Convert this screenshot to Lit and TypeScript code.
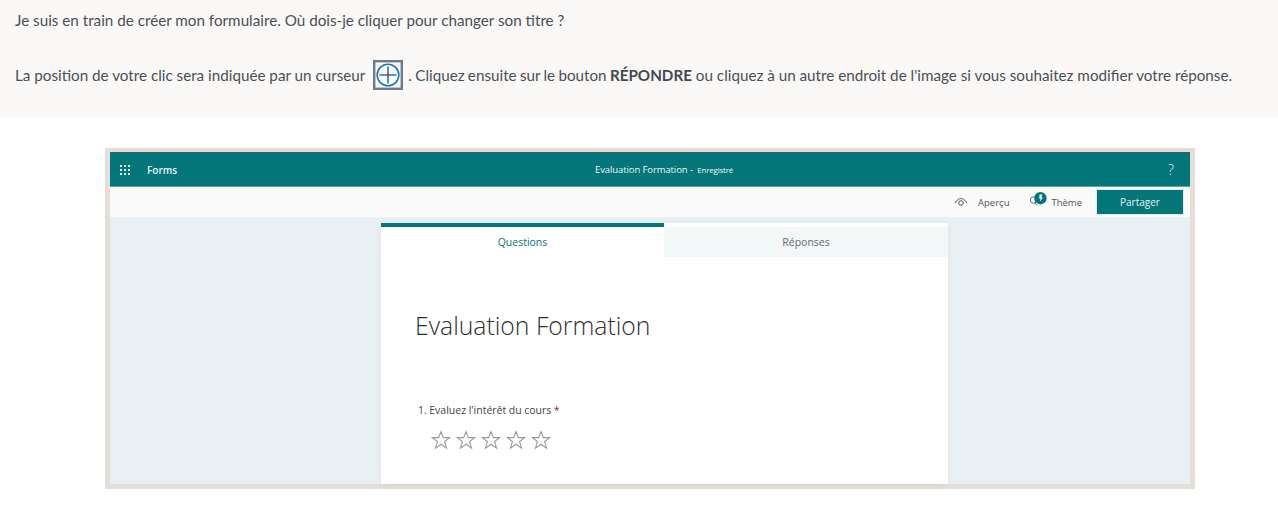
import { LitElement, html, css, svg } from "lit";
import { customElement } from "lit/decorators.js";

const star = svg`<svg class="star" width="20" height="20" viewBox="0 0 20 20"><path d="M10 1.6l2.3 6h6.4l-5.1 3.9 1.9 6.6L10 14.2l-5.5 3.9 1.9-6.6L1.3 7.6h6.4z" fill="none" stroke="#9a9a9a" stroke-width="1.1"/></svg>`;

@customElement("app-root")
export class AppRoot extends LitElement {
  static styles = css`
    :host { display: block; width: 1278px; height: 509px; background: #fff; font-family: Lato, "Liberation Sans", sans-serif; overflow: hidden; }
    .intro { height: 117px; box-sizing: border-box; background: #faf9f7; padding: 10px 15px 0; color: #4a4f55; font-size: 15.22px; }
    .line { line-height: 20px; white-space: nowrap; }
    .l2 { margin-top: 30px; display: flex; align-items: center; height: 30px; }
    .cursor { margin: 0 5px 0 8px; flex: none; display: block; }
    .tight { word-spacing: -0.6px; }
    b { font-weight: 700; color: #44494f; }
    .wrap { padding: 31px 83px 0 105px; }
    .frame { width: 1090px; height: 341px; box-sizing: border-box; border: 5px solid #e3dfd8; border-top-width: 4px; display: flex; flex-direction: column; background: #e8f0f3; font-family: "Open Sans", "Noto Sans", sans-serif; }
    .top { height: 35px; flex: none; box-sizing: border-box; background: #04767a; border-top: 1px solid #4a5a5a; border-bottom: 1px solid #5fa5a8; color: #eaf5f5; display: grid; grid-template-columns: 485px auto 1fr; align-items: center; padding: 0 16px 0 0; }
    .brand { display: flex; align-items: center; gap: 17px; font-size: 10px; font-weight: 600; padding-left: 10px; }
    .grid { display: grid; grid-template-columns: repeat(3, 2px); gap: 2px; }
    .grid i { width: 2px; height: 2px; background: #e6f2f2; }
    .title { font-size: 9.5px; letter-spacing: -0.1px; }
    .title small { font-size: 8px; margin-left: 2px; letter-spacing: -0.2px; }
    .help { justify-self: end; font-size: 14px; font-weight: 300; color: #e0eeee; }
    .tools { height: 30px; flex: none; background: #fafafa; display: flex; align-items: center; justify-content: flex-end; padding: 0 6px 0 0; font-size: 9.5px; color: #555; }
    .tool { display: flex; align-items: center; }
    .preview { gap: 10px; margin-right: 20px; }
    .theme { gap: 4px; margin-right: 14px; }
    .theme svg { margin-top: -5px; }
    .share { width: 88px; height: 26px; background: #04767a; color: #e4f2f2; display: flex; align-items: center; justify-content: center; font-size: 10px; border: 1px solid #d8ecec; box-sizing: border-box; }
    .body { flex: 1; padding: 6px 0 0 271px; min-height: 0; }
    .card { width: 567px; height: 100%; background: #fff; box-shadow: 0 0 6px rgba(0,0,0,.06); display: flex; flex-direction: column; }
    .tabs { display: flex; height: 34px; flex: none; font-size: 10.5px; }
    .tab { flex: 1; display: flex; align-items: center; justify-content: center; box-sizing: border-box; }
    .active { width: 283px; flex: none; border-top: 4px solid #04767a; color: #04767a; background: #fff; }
    .other { background: #f2f7f8; color: #6a6a6a; margin-top: 4px; }
    h1 { margin: 52px 0 0 34px; font-size: 24.75px; font-weight: 300; line-height: 34px; color: #2f2f2f; }
    .q { margin: 60px 0 0 37px; font-size: 10.5px; line-height: 14px; color: #444; word-spacing: -0.2px; }
    .q span { color: #a4262c; }
    .stars { margin: 13px 0 0 50px; display: flex; gap: 5.1px; }
    .star { display: block; }
  `;

  render() {
    return html`
      <div class="intro">
        <div class="line">Je suis en train de créer mon formulaire. Où dois-je cliquer pour changer son titre ?</div>
        <div class="line l2">
          <span>La position de votre clic sera indiquée par un curseur</span>
          <svg class="cursor" width="30" height="30" viewBox="0 0 30 30">
            <rect x="1.2" y="1.2" width="27.6" height="27.6" fill="#fbfbfb" stroke="#6b7b8c" stroke-width="2.4"/>
            <circle cx="15" cy="15" r="10.8" fill="none" stroke="#2276b8" stroke-width="1.6"/>
            <path d="M6.5 15h17M15 6.5v17" stroke="#2276b8" stroke-width="1.6"/>
            <circle cx="15" cy="15" r="1.4" fill="#e0303a"/>
          </svg>
          <span><span class="tight">. Cliquez ensuite sur le bouton </span><b>RÉPONDRE</b> ou cliquez à un autre endroit de l'image si vous souhaitez modifier votre réponse.</span>
        </div>
      </div>
      <div class="wrap">
        <div class="frame">
          <div class="top">
            <div class="brand">
              <div class="grid">${Array.from({ length: 9 }, () => html`<i></i>`)}</div>
              <span>Forms</span>
            </div>
            <div class="title">Evaluation Formation <span>-</span> <small>Enregistré</small></div>
            <div class="help">?</div>
          </div>
          <div class="tools">
            <div class="tool preview">
              <svg width="14" height="10" viewBox="0 0 14 10"><path d="M1 6.2C3 2.6 5 1.6 7 1.6s4 1 6 4.6" fill="none" stroke="#555" stroke-width="1"/><circle cx="7" cy="6" r="2.3" fill="none" stroke="#555" stroke-width="1"/></svg>
              <span>Aperçu</span>
            </div>
            <div class="tool theme">
              <svg width="18" height="15" viewBox="0 0 18 15">
                <circle cx="4.5" cy="8" r="3.2" fill="none" stroke="#666" stroke-width="1"/>
                <path d="M6 11l2 2.5" stroke="#666" stroke-width="1"/>
                <circle cx="11.4" cy="6.2" r="6.2" fill="#04767a"/>
                <path d="M10.6 2.4h2.4l-.5 3h1.2l-2.6 4.4.4-3.4h-1.3z" fill="#fff"/>
              </svg>
              <span>Thème</span>
            </div>
            <div class="share">Partager</div>
          </div>
          <div class="body">
            <div class="card">
              <div class="tabs">
                <div class="tab active">Questions</div>
                <div class="tab other">Réponses</div>
              </div>
              <h1>Evaluation Formation</h1>
              <div class="q">1. Evaluez l'intérêt du cours <span>*</span></div>
              <div class="stars">${[0, 1, 2, 3, 4].map(() => star)}</div>
            </div>
          </div>
        </div>
      </div>
    `;
  }
}
